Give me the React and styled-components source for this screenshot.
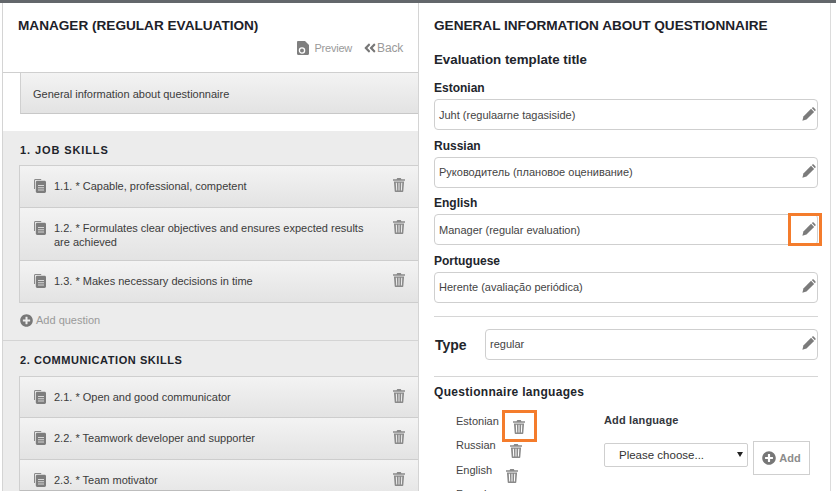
import React from "react";
import styled, { createGlobalStyle } from "styled-components";
import { FaPlusCircle, FaAngleDoubleLeft } from "react-icons/fa";

const Global = createGlobalStyle`
  html, body { margin: 0; padding: 0; background: #fff; }
  body { font-family: "Liberation Sans", Arial, sans-serif; color: #333; overflow: hidden; }
`;

const Page = styled.div`
  position: relative;
  width: 836px;
  height: 491px;
  box-sizing: border-box;
  border-top: 3px solid #63676b;
  display: flex;
  overflow: hidden;
  /* the edge of the next row shows at the very bottom of the shot */
  &::after {
    content: "";
    position: absolute;
    left: 20px;
    bottom: 0;
    width: 210px;
    height: 1px;
    background: #bdbdbd;
  }
`;

const LeftPanel = styled.div`
  width: 417px;
  margin-left: 2px;
  box-sizing: border-box;
  border-left: 1px solid #d4d4d4;
  border-right: 1px solid #d4d4d4;
  flex-shrink: 0;
`;

const Head = styled.div`
  height: 70px;
  box-sizing: border-box;
  padding: 14px 15px 0 15px;
  border-bottom: 1px solid #cfcfcf;
`;

const Title = styled.h1`
  margin: 0;
  font-size: 13.6px;
  line-height: 18px;
  font-weight: bold;
  color: #1d2129;
`;

const HeadLinks = styled.div`
  display: flex;
  justify-content: flex-end;
  align-items: center;
  gap: 11px;
  margin-top: 5px;
  letter-spacing: -0.2px;
  color: #9a9a9a;
`;

const HeadLink = styled.span`
  display: flex;
  align-items: center;
  gap: ${(p) => p.$gap || 0}px;
  font-size: ${(p) => p.$size || 11}px;
  line-height: 16px;
`;

const rowFill = `
  background: linear-gradient(#f3f3f3, #e3e3e3);
`;

const InfoWrap = styled.div`
  padding: 0 0 17px 17px;
  background: #fff;
`;

const InfoRow = styled.div`
  ${rowFill}
  height: 41px;
  box-sizing: border-box;
  border-left: 1px solid #d0d0d0;
  border-bottom: 1px solid #c8c8c8;
  padding: 2px 0 0 12px;
  display: flex;
  align-items: center;
  font-size: 11px;
  color: #3b3b3b;
`;

const Section = styled.section`
  background: #ececec;
  padding: 11px 0 0 16px;
  border-bottom: ${(p) => (p.$last ? "none" : "1px solid #d4d4d4")};
`;

const SectionTitle = styled.h2`
  margin: 0 0 ${(p) => p.$after}px;
  padding-left: 1px;
  font-size: 11px;
  line-height: 16px;
  font-weight: bold;
  letter-spacing: ${(p) => p.$track}px;
  color: #20232a;
`;

const Cards = styled.div`
  border-top: 1px solid #cfcfcf;
  border-left: 1px solid #cfcfcf;
`;

const Question = styled.div`
  ${rowFill}
  box-sizing: border-box;
  height: ${(p) => p.$h}px;
  border-bottom: 1px solid #cdcdcd;
  padding: 14px 13px 0 13px;
  display: flex;
  align-items: flex-start;
  font-size: 11px;
  line-height: 13.5px;
  color: #3b3b3b;
`;

const QuestionIcon = styled.span`
  display: block;
  flex-shrink: 0;
  margin-top: ${(p) => p.$shift}px;
  line-height: 0;
`;

const QuestionText = styled.div`
  flex: 1;
  margin-left: 8px;
  padding-right: 18px;
`;

const AddQuestion = styled.div`
  height: 37px;
  padding-bottom: 3px;
  box-sizing: border-box;
  padding-left: 1px;
  display: flex;
  align-items: center;
  gap: 3px;
  font-size: 11px;
  color: #9a9a9a;
  svg { color: #777; }
`;

const RightPanel = styled.div`
  width: 412px;
  box-sizing: border-box;
  padding: 14px 12px 0 15px;
  border-right: 1px solid #dcdcdc;
  flex-shrink: 0;
`;

const RightTitle = styled.h1`
  margin: 0 0 16px;
  font-size: 13.6px;
  line-height: 18px;
  font-weight: bold;
  color: #1d2129;
`;

const SubTitle = styled.h2`
  margin: 0 0 12px;
  font-size: 13.3px;
  line-height: 18px;
  font-weight: bold;
  color: #22252b;
`;

const FieldLabel = styled.div`
  font-size: 12px;
  font-weight: bold;
  line-height: 15px;
  letter-spacing: ${(p) => p.$track || 0}px;
  color: #22252b;
  margin-bottom: 3px;
`;

const Field = styled.div`
  margin-bottom: 8.67px;
`;

const InputBox = styled.div`
  position: relative;
  flex: 1;
  height: 31px;
  box-sizing: border-box;
  border: 1px solid #cfcfcf;
  border-radius: 4px;
  background: #fff;
  padding: 0 0 0 4px;
  display: flex;
  align-items: center;
  justify-content: space-between;
  font-size: 11px;
  color: #444;
  svg { margin: -2px 0 0; }
`;

const Highlight = styled.span`
  position: absolute;
  border: 3px solid #f47c2c;
  box-sizing: border-box;
  width: ${(p) => p.$w}px;
  height: ${(p) => p.$h}px;
  left: ${(p) => p.$x}px;
  top: ${(p) => p.$y}px;
`;

const Rule = styled.hr`
  margin: ${(p) => p.$top}px 0 ${(p) => p.$bottom}px;
  border: 0;
  border-top: 1px solid #d6d6d6;
`;

const TypeRow = styled.div`
  display: flex;
  align-items: center;
`;

const TypeLabel = styled.div`
  width: 51px;
  font-size: 14px;
  font-weight: bold;
  color: #22252b;
  padding: 2px 0 0 1px;
  box-sizing: border-box;
`;

const LangColumns = styled.div`
  display: flex;
  margin-top: 14px;
`;

const LangList = styled.div`
  width: 170px;
  padding-left: 22px;
  box-sizing: border-box;
`;

const Lang = styled.div`
  position: relative;
  height: 24.5px;
  display: flex;
  font-size: 11px;
  line-height: 14px;
  color: #444;
`;

const LangTrash = styled.span`
  margin-left: 14px;
  margin-top: 6px;
  line-height: 0;
`;

const AddLang = styled.div`
  width: 206px;
`;

const AddLabel = styled.div`
  font-size: 11px;
  font-weight: bold;
  line-height: 12px;
  letter-spacing: 0.15px;
  color: #33363c;
  margin-bottom: 15px;
`;

const AddControls = styled.div`
  display: flex;
  align-items: flex-start;
  gap: 5px;
`;

const Select = styled.div`
  width: 144px;
  height: 24px;
  margin-top: 2px;
  box-sizing: border-box;
  border: 1px solid #cfcfcf;
  border-radius: 2px;
  padding: 0 4px 0 14px;
  display: flex;
  align-items: center;
  justify-content: space-between;
  font-size: 11.5px;
  color: #333;
  &::after {
    content: "";
    border-left: 3px solid transparent;
    border-right: 3px solid transparent;
    border-top: 5px solid #222;
  }
`;

const AddButton = styled.div`
  width: 57px;
  height: 34px;
  box-sizing: border-box;
  border: 1px solid #cfcfcf;
  display: flex;
  align-items: center;
  justify-content: center;
  gap: 3px;
  font-size: 11px;
  font-weight: bold;
  color: #8c8c8c;
  svg { color: #777; }
`;

// the theme's own glyphs, drawn because the icon packs have other strokes
const TrashIcon = () => (
  <svg width="12" height="14" viewBox="0 0 12 14" fill="#8a8a8a">
    <path d="M4.2 0h3.600l.6 1.300H12v1.400H0V1.300h3.600z" />
    <path
      d="M.9 3.500h10.200l-.8 9.700c0 .5-.3.8-.8.8H2.500c-.5 0-.8-.3-.8-.8zm1.900 1.200.4 7.800h1l-.3-7.800zm2.700 0v7.800h1V4.700zm2.700 0-.3 7.800h1l.4-7.800z"
      fillRule="evenodd"
    />
  </svg>
);

const CopyIcon = () => (
  <svg width="13" height="14" viewBox="0 0 13 14">
    <path d="M1 1.500C1 .7 1.600 0 2.400 0h5.800v1H2.600C2.200 1 2 1.300 2 1.700V10H1z" fill="#8a8a8a" />
    <path d="M2.800 3.200c0-.8.6-1.400 1.400-1.400h7.400c.8 0 1.400.6 1.400 1.400v9.400c0 .8-.6 1.400-1.400 1.400H4.200c-.8 0-1.400-.6-1.400-1.400z" fill="#7d7d7d" />
    <path d="M5 6h6v1H5zm0 2.200h6v1H5zm0 2.200h6v1H5z" fill="#d8d8d8" />
  </svg>
);

const PreviewIcon = () => (
  <svg width="12" height="14" viewBox="0 0 12 14">
    <path d="M0 1.200C0 .5.500 0 1.200 0H8l4 4v8.800c0 .7-.5 1.200-1.200 1.200H1.200C.5 14 0 13.500 0 12.800z" fill="#7f7f7f" />
    <circle cx="5" cy="9.500" r="2.600" fill="none" stroke="#fff" strokeWidth="1.300" />
  </svg>
);

const PencilWrap = styled.span`
  display: block;
  margin-right: 1px;
  line-height: 0;
`;

const PencilIcon = () => (
  <PencilWrap>
    <svg width="14" height="14" viewBox="0 0 15 15" fill="#7b7b7b">
      <path d="M.4 14.600l1.100-4.400L9.700 2l3.300 3.300-8.200 8.200z" />
      <path d="M10.500 1.200l.5-.5c.5-.5 1.200-.5 1.700 0l1.600 1.600c.5.5.5 1.200 0 1.700l-.5.5z" />
    </svg>
  </PencilWrap>
);

const sections = [
  {
    title: "1. JOB SKILLS",
    track: 0.9,
    after: 7,
    rows: [
      { text: "1.1. * Capable, professional, competent", h: 42 },
      { text: "1.2. * Formulates clear objectives and ensures expected results are achieved", h: 53 },
      { text: "1.3. * Makes necessary decisions in time", h: 42 },
    ],
    add: true,
  },
  {
    title: "2. COMMUNICATION SKILLS",
    track: 0.56,
    after: 8,
    rows: [
      { text: "2.1. * Open and good communicator", h: 41 },
      { text: "2.2. * Teamwork developer and supporter", h: 42 },
      { text: "2.3. * Team motivator", h: 42 },
    ],
  },
];

const titles = [
  { lang: "Estonian", value: "Juht (regulaarne tagasiside)" },
  { lang: "Russian", value: "Руководитель (плановое оценивание)" },
  { lang: "English", value: "Manager (regular evaluation)", marked: true },
  { lang: "Portuguese", value: "Herente (avaliação periódica)" },
];

const languages = [
  { name: "Estonian", marked: true },
  { name: "Russian" },
  { name: "English" },
  { name: "French" },
];

export default function App() {
  return (
    <>
      <Global />
      <Page>
        <LeftPanel>
          <Head>
            <Title>MANAGER (REGULAR EVALUATION)</Title>
            <HeadLinks>
              <HeadLink $gap={5}>
                <PreviewIcon />
                Preview
              </HeadLink>
              <HeadLink $size={12}>
                <FaAngleDoubleLeft size={14} color="#777" />
                Back
              </HeadLink>
            </HeadLinks>
          </Head>
          <InfoWrap>
            <InfoRow>General information about questionnaire</InfoRow>
          </InfoWrap>
          {sections.map((s, i) => (
            <Section key={s.title} $last={i === sections.length - 1}>
              <SectionTitle $track={s.track} $after={s.after}>
                {s.title}
              </SectionTitle>
              <Cards>
                {s.rows.map((r) => (
                  <Question key={r.text} $h={r.h}>
                    <QuestionIcon $shift={-1}>
                      <CopyIcon />
                    </QuestionIcon>
                    <QuestionText>{r.text}</QuestionText>
                    <QuestionIcon $shift={-2}>
                      <TrashIcon />
                    </QuestionIcon>
                  </Question>
                ))}
              </Cards>
              {s.add && (
                <AddQuestion>
                  <FaPlusCircle size={13} />
                  Add question
                </AddQuestion>
              )}
            </Section>
          ))}
        </LeftPanel>
        <RightPanel>
          <RightTitle>GENERAL INFORMATION ABOUT QUESTIONNAIRE</RightTitle>
          <SubTitle>Evaluation template title</SubTitle>
          {titles.map((t) => (
            <Field key={t.lang}>
              <FieldLabel>{t.lang}</FieldLabel>
              <InputBox>
                {t.value}
                <PencilIcon />
                {t.marked && <Highlight $x={353} $y={-2} $w={34} $h={33} />}
              </InputBox>
            </Field>
          ))}
          <Rule $top={13} $bottom={12} />
          <TypeRow>
            <TypeLabel>Type</TypeLabel>
            <InputBox>
              regular
              <PencilIcon />
            </InputBox>
          </TypeRow>
          <Rule $top={16} $bottom={8} />
          <FieldLabel $track={0.3}>Questionnaire languages</FieldLabel>
          <LangColumns>
            <LangList>
              {languages.map((l) => (
                <Lang key={l.name}>
                  {l.name}
                  <LangTrash>
                    <TrashIcon />
                  </LangTrash>
                  {l.marked && <Highlight $x={46} $y={-4} $w={35} $h={32} />}
                </Lang>
              ))}
            </LangList>
            <AddLang>
              <AddLabel>Add language</AddLabel>
              <AddControls>
                <Select>Please choose...</Select>
                <AddButton>
                  <FaPlusCircle size={14} />
                  Add
                </AddButton>
              </AddControls>
            </AddLang>
          </LangColumns>
        </RightPanel>
      </Page>
    </>
  );
}
